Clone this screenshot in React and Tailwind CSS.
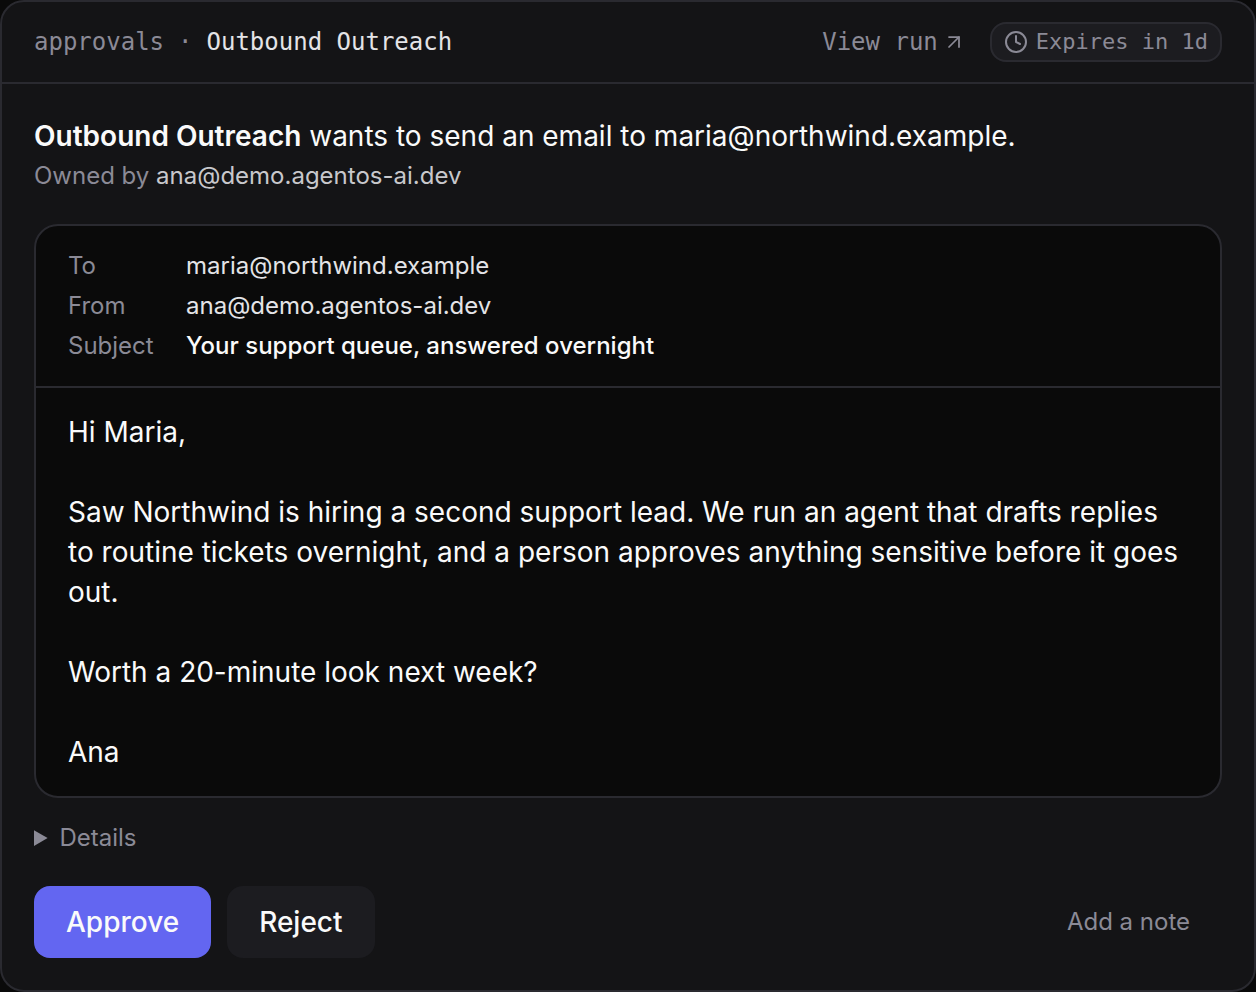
import { ArrowUpRight, Clock } from "lucide-react";

const headers = [
  { label: "To", value: "maria@northwind.example" },
  { label: "From", value: "ana@demo.agentos-ai.dev" },
  { label: "Subject", value: "Your support queue, answered overnight", strong: true },
];

const body = `Hi Maria,

Saw Northwind is hiring a second support lead. We run an agent that drafts replies to routine tickets overnight, and a person approves anything sensitive before it goes out.

Worth a 20-minute look next week?

Ana`;

export default function App() {
  return (
    <div className="min-h-screen bg-[#0a0a0a] font-['Inter',sans-serif] text-[#fafafa] antialiased">
      <article className="flex min-h-screen flex-col rounded-3xl border-2 border-[#2a2a30] bg-[#141416]">

        {/* TOP BAR */}
        <header className="flex items-center justify-between border-b-2 border-[#2a2a30] px-8 py-5 font-['DejaVu_Sans_Mono','Liberation_Mono',monospace] text-2xl leading-10">
          <nav className="flex items-center text-[#8b8a96]">
            <span>approvals</span>
            <span className="mx-3.5">·</span>
            <span className="text-[#e4e4e7]">Outbound Outreach</span>
          </nav>
          <div className="flex items-center gap-6 text-[#8b8a96]">
            <a href="#run" className="flex items-center gap-1">
              View run
              <ArrowUpRight size={24} strokeWidth={1.75} />
            </a>
            <span className="flex h-10 items-center gap-2 rounded-2xl border-2 border-[#2a2a30] bg-[#1c1c20] px-3 text-[22px]">
              <Clock size={24} strokeWidth={2} />
              Expires in 1d
            </span>
          </div>
        </header>

        <main className="flex flex-col px-8 pt-8 pb-8">
          <h1 className="text-[28px] leading-10">
            <strong className="font-semibold">Outbound Outreach</strong> wants to send an email to maria@northwind.example.
          </h1>
          <p className="text-2xl leading-10 text-[#8b8a96]">
            Owned by <span className="text-[#c8c8cc]">ana@demo.agentos-ai.dev</span>
          </p>

          {/* EMAIL */}
          <section className="mt-7 rounded-3xl border-2 border-[#2a2a30] bg-[#0a0a0a]">
            <dl className="grid grid-cols-[86px_1fr] gap-x-8 border-b-2 border-[#2a2a30] px-8 py-5 text-2xl leading-10">
              {headers.map((h) => (
                <div key={h.label} className="contents">
                  <dt className="text-[#8b8a96]">{h.label}</dt>
                  <dd className={h.strong ? "font-medium" : "text-[#e4e4e7]"}>{h.value}</dd>
                </div>
              ))}
            </dl>
            <p className="whitespace-pre-wrap px-8 py-6 text-[28px] leading-10">{body}</p>
          </section>

          <details className="mt-5 text-2xl leading-10 text-[#8b8a96]">
            <summary>Details</summary>
            <p>Email draft awaiting approval</p>
          </details>

          {/* ACTIONS */}
          <div className="mt-7 flex items-center gap-4 text-[28px] font-medium">
            <button className="h-18 rounded-2xl bg-[#6366f1] px-8">Approve</button>
            <button className="h-18 rounded-2xl bg-[#1c1c20] px-8">Reject</button>
            <button className="ml-auto px-8 text-2xl font-normal text-[#8b8a96]">Add a note</button>
          </div>
        </main>
      </article>
    </div>
  );
}
